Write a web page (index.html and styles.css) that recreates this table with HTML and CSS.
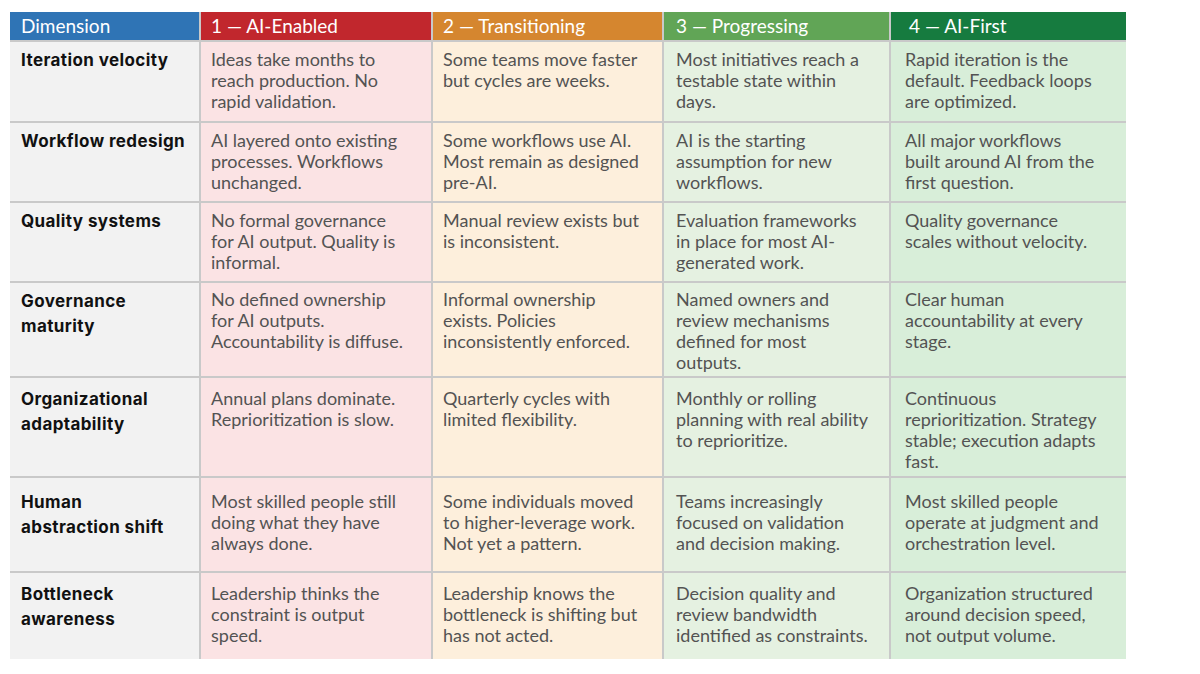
FILE: index.html
```html
<!DOCTYPE html>
<html lang="en">
<head>
<meta charset="utf-8">
<title>AI Maturity Matrix</title>
<link rel="stylesheet" href="styles.css">
</head>
<body>
<div class="matrix">
  <div class="hd hd-dim">Dimension</div>
  <div class="hd hd-1">1 — AI-Enabled</div>
  <div class="hd hd-2">2 — Transitioning</div>
  <div class="hd hd-3">3 — Progressing</div>
  <div class="hd hd-4">4 — AI-First</div>

  <div class="lbl r1">Iteration velocity</div>
  <div class="cell c1 r1">Ideas take months to reach production. No rapid validation.</div>
  <div class="cell c2 r1">Some teams move faster but cycles are weeks.</div>
  <div class="cell c3 r1">Most initiatives reach a testable state within days.</div>
  <div class="cell c4 r1">Rapid iteration is the default. Feedback loops are optimized.</div>

  <div class="lbl r2">Workflow redesign</div>
  <div class="cell c1 r2">AI layered onto existing processes. Workflows unchanged.</div>
  <div class="cell c2 r2">Some workflows use AI. Most remain as designed pre-AI.</div>
  <div class="cell c3 r2">AI is the starting assumption for new workflows.</div>
  <div class="cell c4 r2">All major workflows built around AI from the first question.</div>

  <div class="lbl r3">Quality systems</div>
  <div class="cell c1 r3">No formal governance for AI output. Quality is informal.</div>
  <div class="cell c2 r3">Manual review exists but is inconsistent.</div>
  <div class="cell c3 r3">Evaluation frameworks in place for most AI-generated work.</div>
  <div class="cell c4 r3">Quality governance scales without velocity.</div>

  <div class="lbl r4">Governance maturity</div>
  <div class="cell c1 r4">No defined ownership for AI outputs. Accountability is diffuse.</div>
  <div class="cell c2 r4">Informal ownership exists. Policies inconsistently enforced.</div>
  <div class="cell c3 r4">Named owners and review mechanisms defined for most outputs.</div>
  <div class="cell c4 r4">Clear human accountability at every stage.</div>

  <div class="lbl r5">Organizational adaptability</div>
  <div class="cell c1 r5">Annual plans dominate. Reprioritization is slow.</div>
  <div class="cell c2 r5">Quarterly cycles with limited flexibility.</div>
  <div class="cell c3 r5">Monthly or rolling planning with real ability to reprioritize.</div>
  <div class="cell c4 r5">Continuous reprioritization. Strategy stable; execution adapts fast.</div>

  <div class="lbl r6">Human <span class="keep">abstraction shift</span></div>
  <div class="cell c1 r6">Most skilled people still doing what they have always done.</div>
  <div class="cell c2 r6">Some individuals moved to higher-leverage work. Not yet a pattern.</div>
  <div class="cell c3 r6">Teams increasingly focused on validation and decision making.</div>
  <div class="cell c4 r6">Most skilled people operate at judgment and orchestration level.</div>

  <div class="lbl r7">Bottleneck awareness</div>
  <div class="cell c1 r7">Leadership thinks the constraint is output speed.</div>
  <div class="cell c2 r7">Leadership knows the bottleneck is shifting but has not acted.</div>
  <div class="cell c3 r7">Decision quality and review bandwidth identified as constraints.</div>
  <div class="cell c4 r7">Organization structured around decision speed, not output volume.</div>
</div>
</body>
</html>
```

FILE: styles.css
```css
html, body {
  margin: 0;
  padding: 0;
  background: #ffffff;
}

body {
  padding: 12px 0 0 10px;
  font-family: "Lato", "Liberation Sans", sans-serif;
}

.matrix {
  display: grid;
  width: 1116px;
  grid-template-columns: 189px 230px 229px 225px 235px;
  grid-template-rows: 28px 79px 78px 78px 93px 98px 93px 86px;
  gap: 2px;
  background: #c9c9c9;
}

.hd {
  color: #ffffff;
  font-size: 19px;
  line-height: 28px;
  padding-left: 11px;
  white-space: nowrap;
}

.hd-dim { background: #2f74b5; }
.hd-1 { background: #c1272d; padding-left: 10px; }
.hd-2 { background: #d5862f; padding-left: 10px; }
.hd-3 { background: #61a556; padding-left: 12px; }
.hd-4 { background: #167b3f; padding-left: 18px; }

.lbl {
  background: #f2f2f2;
  color: #111111;
  font-family: "Inter", "Noto Sans", sans-serif;
  font-weight: 700;
  font-size: 17px;
  letter-spacing: 0.4px;
  line-height: 25px;
  padding: 6px 10px 0 11px;
}

.keep { white-space: nowrap; }

.cell {
  color: #535353;
  font-size: 18px;
  line-height: 21px;
  padding: 7px 20px 0 10px;
}

.c1 { background: #fbe3e4; }
.c2 { background: #fdefdc; padding-right: 19px; }
.c3 { background: #e5f1e1; padding-left: 12px; padding-right: 17px; }
.c4 { background: #d8eed9; padding-left: 14px; padding-right: 25px; }

.r4.cell { padding-top: 6px; }
.r5.cell, .r7.cell { padding-top: 10px; }
.r6.cell { padding-top: 13px; }
.r5.lbl, .r7.lbl { padding-top: 9px; }
.r6.lbl { padding-top: 12px; }
```
